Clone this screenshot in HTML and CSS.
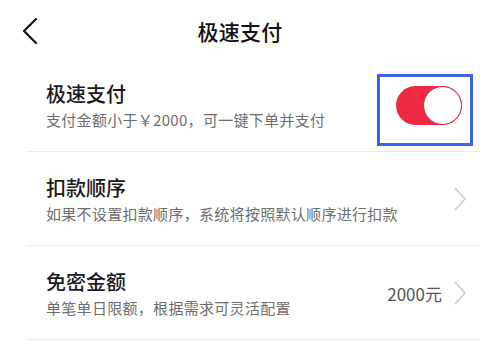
FILE: index.html
```html
<html lang="zh-CN">
<head>
<meta charset="UTF-8" />
<meta name="viewport" content="width=device-width, initial-scale=1" />
<title>极速支付</title>
<link rel="stylesheet" href="styles.css">
</head>
<body>
  <header class="topbar">
    <svg class="back" width="18" height="28" viewBox="0 0 18 28">
      <polyline points="15,2 3,14 15,26" fill="none" stroke="#111" stroke-width="2.2" stroke-linecap="round" stroke-linejoin="round"/>
    </svg>
    <h1 class="title">极速支付</h1>
  </header>

  <ul class="list">
    <li class="row">
      <div class="text">
        <div class="name">极速支付</div>
        <div class="desc">支付金额小于￥2000，可一键下单并支付</div>
      </div>
      <div class="switch-wrap">
        <div class="switch on"><span class="knob"></span></div>
      </div>
    </li>
    <li class="row">
      <div class="text">
        <div class="name">扣款顺序</div>
        <div class="desc">如果不设置扣款顺序，系统将按照默认顺序进行扣款</div>
      </div>
      <svg class="arrow" width="12" height="24" viewBox="0 0 12 24">
        <polyline points="1,1 11,12 1,23" fill="none" stroke="#c6c6c6" stroke-width="1.3"/>
      </svg>
    </li>
    <li class="row">
      <div class="text">
        <div class="name">免密金额</div>
        <div class="desc">单笔单日限额，根据需求可灵活配置</div>
      </div>
      <span class="value">2000元</span>
      <svg class="arrow" width="12" height="24" viewBox="0 0 12 24">
        <polyline points="1,1 11,12 1,23" fill="none" stroke="#c6c6c6" stroke-width="1.3"/>
      </svg>
    </li>
  </ul>
</body>
</html>
```

FILE: styles.css
```css
*{box-sizing:border-box}
body{
  margin:0;
  background:#fff;
  color:#111;
  font-family:"Noto Sans CJK SC","Noto Sans",sans-serif;
}

/* 顶部栏 */
.topbar{
  height:59px;
  padding-top:3px;
  display:flex;
  align-items:center;
  justify-content:center;
  position:relative;
}
.back{
  position:absolute;
  left:21px;
  top:17px;
}
.title{
  margin:0;
  font-size:21px;
  font-weight:500;
  letter-spacing:0.3px;
}

/* 设置列表 */
.list{
  list-style:none;
  margin:0 0 0 26px;
  padding:0;
}
.row{
  display:flex;
  align-items:center;
  padding:22px 14px 21px 20px;
  border-bottom:1px solid #ececec;
}
.row:first-child{padding-top:21px;padding-bottom:21px}
.text{flex:1}
.name{
  font-size:20px;
  line-height:28px;
  font-weight:500;
  color:#1a1a1a;
}
.desc{
  margin-top:2px;
  font-size:15px;
  line-height:20px;
  letter-spacing:0.3px;
  color:#6e6e6e;
}
.value{
  font-size:17px;
  color:#555;
  margin-right:12px;
}

/* 开关 */
.switch-wrap{
  position:relative;
  margin-right:4px;
}
.switch-wrap::after{
  content:"";
  position:absolute;
  left:-19px; right:-11px;
  top:-12px; bottom:-21px;
  border:3px solid #3d61ea;
}
.switch{
  width:66px;
  height:39px;
  border-radius:20px;
  background:#ee2a42;
  position:relative;
}
.knob{
  position:absolute;
  right:0; top:0;
  width:39px; height:39px;
  border-radius:50%;
  background:#fff;
  border:1.5px solid #d02a3e;
}
```
